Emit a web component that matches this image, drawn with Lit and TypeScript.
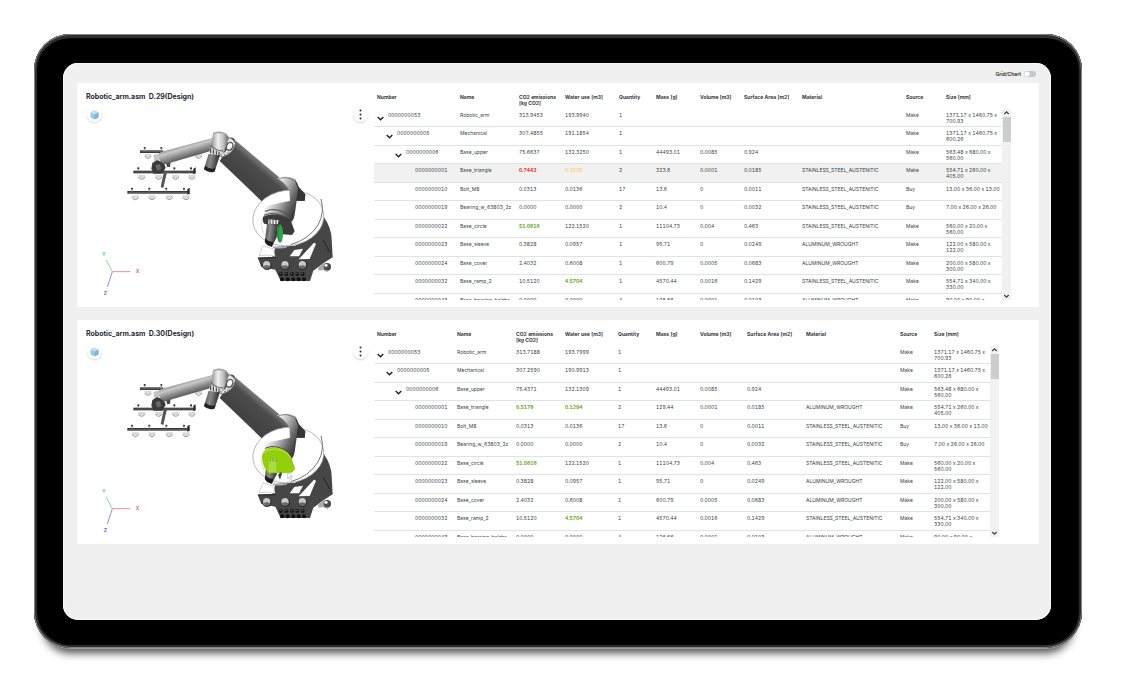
import { LitElement, html, svg, css, nothing } from "lit";
import { customElement, property } from "lit/decorators.js";
import { classMap } from "lit/directives/class-map.js";

type Tone = "bad" | "warn" | "good";
interface Cell { text: string; tone?: Tone }
interface Part {
  level: number;
  number: string;
  name: string;
  co2: Cell;
  water: Cell;
  rest: string[];
  selected?: boolean;
}
interface Revision {
  id: string;
  title: string;
  capHighlighted: boolean;
  columns: number[];
  parts: Part[];
}

const HEADERS = [
  ["Number"], ["Name"], ["CO2 emissions", "[kg CO2]"], ["Water use [m3]"], ["Quantity"], ["Mass [g]"],
  ["Volume [m3]"], ["Surface Area [m2]"], ["Material"], ["Source"], ["Size [mm]"],
];

const STEEL = "STAINLESS_STEEL_AUSTENITIC";
const ALU = "ALUMINUM_WROUGHT";

const c = (text: string, tone?: Tone): Cell => ({ text, tone });

const shared: Part[] = [
  { level: 3, number: "0000000010", name: "Bolt_M8", co2: c("0.0313"), water: c("0.0136"), rest: ["17", "13.6", "0", "0.0011", STEEL, "Buy", "13.00 x 36.00 x 13.00"] },
  { level: 3, number: "0000000019", name: "Bearing_w_63803_2z", co2: c("0.0000"), water: c("0.0000"), rest: ["2", "10.4", "0", "0.0032", STEEL, "Buy", "7.00 x 26.00 x 26.00"] },
  { level: 3, number: "0000000022", name: "Base_circle", co2: c("51.0818", "good"), water: c("122.1520"), rest: ["1", "11104.73", "0.004", "0.463", STEEL, "Make", "560.00 x 20.00 x 560.00"] },
  { level: 3, number: "0000000023", name: "Base_sleeve", co2: c("0.3828"), water: c("0.0957"), rest: ["1", "95.71", "0", "0.0249", ALU, "Make", "122.00 x 580.00 x 122.00"] },
  { level: 3, number: "0000000024", name: "Base_cover", co2: c("2.4032"), water: c("0.6008"), rest: ["1", "600.79", "0.0005", "0.0683", ALU, "Make", "200.00 x 580.00 x 300.00"] },
  { level: 3, number: "0000000032", name: "Base_ramp_2", co2: c("10.5120"), water: c("4.5704", "good"), rest: ["1", "4570.44", "0.0016", "0.1429", STEEL, "Make", "554.71 x 340.00 x 330.00"] },
  { level: 3, number: "0000000043", name: "Base_bearing_holder", co2: c("0.0000"), water: c("0.0000"), rest: ["4", "126.66", "0.0001", "0.0103", ALU, "Make", "90.00 x 90.00 x 120.00"] },
];

const top = (co2: string[], water: string[]): Part[] => [
  { level: 0, number: "0000000053", name: "Robotic_arm", co2: c(co2[0]), water: c(water[0]), rest: ["1", "", "", "", "", "Make", "1371.17 x 1460.75 x 700.93"] },
  { level: 1, number: "0000000005", name: "Mechanical", co2: c(co2[1]), water: c(water[1]), rest: ["1", "", "", "", "", "Make", "1371.17 x 1460.75 x 600.26"] },
  { level: 2, number: "0000000006", name: "Base_upper", co2: c(co2[2]), water: c(water[2]), rest: ["1", "44493.01", "0.0085", "0.924", "", "Make", "563.48 x 680.00 x 560.00"] },
];

const REVISIONS: Revision[] = [
  {
    id: "d29",
    title: "Robotic_arm.asm  D.29(Design)",
    capHighlighted: false,
    columns: [83, 59, 46, 54, 37, 44, 44, 58, 104, 40, 59],
    parts: [
      ...top(["313.9453", "307.4855", "75.6637"], ["193.9940", "191.1854", "132.3250"]),
      { level: 3, number: "0000000001", name: "Base_triangle", co2: c("0.7443", "bad"), water: c("0.3236", "warn"), rest: ["2", "323.6", "0.0001", "0.0185", STEEL, "Make", "554.71 x 260.00 x 405.00"], selected: true },
      ...shared,
    ],
  },
  {
    id: "d30",
    title: "Robotic_arm.asm  D.30(Design)",
    capHighlighted: true,
    columns: [80, 59, 49, 53, 38, 44, 47, 59, 94, 34, 59],
    parts: [
      ...top(["313.7188", "307.2590", "75.4371"], ["193.7999", "190.9913", "132.1309"]),
      { level: 3, number: "0000000001", name: "Base_triangle", co2: c("0.5178", "good"), water: c("0.1294", "good"), rest: ["2", "129.44", "0.0001", "0.0185", ALU, "Make", "554.71 x 260.00 x 405.00"] },
      ...shared,
    ],
  },
];

@customElement("arm-model")
class ArmModel extends LitElement {
  @property({ type: Boolean }) highlighted = false;

  static styles = css`
    :host { display: block; }
    .scene { display: block; width: 290px; height: 224px; }
    .axis { font: 700 15px Inter, "Liberation Sans", sans-serif; }
  `;

  private cup(x: number, y: number) {
    return svg`<path d=${`M${x - 11} ${y - 4}h22q-1 10-11 10t-11-10z`} fill="#d9d9d9"/>
      <path d=${`M${x - 10} ${y + 2}q4 7 10 7t10-7`} fill="none" stroke="#666" stroke-width="2"/>`;
  }

  private rail(x1: number, x2: number, y: number, posts: number[], capped: boolean) {
    return svg`<rect x=${x1} y=${y - 4} width=${x2 - x1} height="8" fill="#383838"/>
      <rect x=${x1 + 4} y=${y - 1} width=${x2 - x1 - 8} height="2" fill="#707070"/>
      ${posts.map((p) => svg`<rect x=${p - 3} y=${y - 14} width="6" height="6" rx="2" fill="#333"/><rect x=${p - 2} y=${y - 9} width="4" height="6" fill="#aaa"/>`)}
      ${capped ? svg`<path d=${`M${x2 - 6} ${y - 10}l7-4v18l-7 3z`} fill="#2c2c2c"/>` : nothing}`;
  }

  render() {
    return html`<svg class="scene" viewBox="3 -3 870 672" role="img" aria-label="Robotic arm model">
      <defs>
        <linearGradient id="fore" x1="320" y1="180" x2="334" y2="226" gradientUnits="userSpaceOnUse">
          <stop offset="0" stop-color="#8b8b8b"/><stop offset=".3" stop-color="#c9c9c9"/><stop offset=".6" stop-color="#8f8f8f"/><stop offset="1" stop-color="#4b4b4b"/>
        </linearGradient>
        <linearGradient id="upper" x1="554" y1="222" x2="505" y2="280" gradientUnits="userSpaceOnUse">
          <stop offset="0" stop-color="#a9a9a9"/><stop offset=".14" stop-color="#777"/><stop offset=".4" stop-color="#4c4c4c"/><stop offset="1" stop-color="#434343"/>
        </linearGradient>
        <linearGradient id="joint" x1="0" x2="1" y1="0" y2="0">
          <stop offset="0" stop-color="#8c8c8c"/><stop offset=".4" stop-color="#f0f0f0"/><stop offset=".7" stop-color="#bdbdbd"/><stop offset="1" stop-color="#5d5d5d"/>
        </linearGradient>
        <linearGradient id="shoulder" x1="590" y1="330" x2="664" y2="366" gradientUnits="userSpaceOnUse">
          <stop offset="0" stop-color="#f2f2f2"/><stop offset=".35" stop-color="#b5b5b5"/><stop offset=".7" stop-color="#6c6c6c"/><stop offset="1" stop-color="#3c3c3c"/>
        </linearGradient>
        <linearGradient id="motor" x1="0" x2="1" y1="0" y2=".2">
          <stop offset="0" stop-color="#444"/><stop offset=".45" stop-color="#8a8a8a"/><stop offset="1" stop-color="#2a2a2a"/>
        </linearGradient>
      </defs>

      ${this.cup(368, 214)}
      ${this.rail(192, 262, 203, [206, 256], false)}
      ${this.cup(216, 214)}
      ${this.rail(172, 358, 264, [187, 240, 295, 345], true)}
      ${[197, 248, 299, 348].map((x) => this.cup(x, 277))}
      ${this.rail(154, 340, 325, [168, 220, 271, 324], true)}
      ${[178, 228, 280, 330].map((x) => this.cup(x, 338))}
      <path d="M264 262l9 2-11 48-8-3z" fill="#555"/>
      <path d="M232 212l14-2 4 24-14 4z" fill="#c5c5c5"/>
      <path d="M229 237l14-8 20 6 6 16-10 18-26 0-7-15z" fill="#3a3a3a"/>
      <path d="M238 244l14-4 4 14-12 6z" fill="#686868"/>
      <path d="M270 236l14-3-2 16-9 0z" fill="#4a4a4a"/>

      <path d="M245 214q2-8 12-11L412 161v38L268 241q-16-2-23-27z" fill="url(#fore)"/>

      <ellipse cx="455" cy="190" rx="19" ry="33" transform="rotate(32 455 190)" fill="#555"/>
      <path d="M472 169q8 0 16 8l128 108 32 34-8 32-66 17L431 231q14-24 27-31t14-31z" fill="url(#upper)"/>
      <path d="M447 160q22-1 31 18-4 30-41 42l-6-6q20-10 27-26z" fill="#e6e6e6" stroke="#666" stroke-width="2"/>
      <ellipse cx="461" cy="187" rx="9" ry="12" transform="rotate(25 461 187)" fill="#fff" stroke="#555" stroke-width="4"/>
      <path d="M434 218q30-12 40-36" fill="none" stroke="#444" stroke-width="3" stroke-dasharray="5 6"/>

      <path d="M411 147q18-10 40 2l8 12-18 50q-22 2-37-18z" fill="url(#joint)"/>
      <path d="M411 147q18-10 40 2l3 5q-22-10-43-3z" fill="#a8a8a8"/>
      <path d="M405 183q12 18 37 18" fill="none" stroke="#555" stroke-width="3"/>
      <path d="M402 192l34 12-6 10-30-8z" fill="#ddd"/>
      <path d="M404 194v14M412 197v14M421 200v12M429 203v11" stroke="#333" stroke-width="3"/>
      <path d="M398 209l34 5-16 48q-15 7-32-7z" fill="url(#motor)"/>
      <path d="M387 245q14 12 32 8l-4 10q-17 6-31-7z" fill="#222"/>

      <path d="M739 372l4 26q24 35 24 68l3 54-28 18-30 22-10 31h-88l-16-34-42-8-11-28 44-2 10-30 58-4 52-26 22-45z" fill="#464646"/>
      <path d="M549 515l12-30 32 10 4 22-22-4z" fill="#fff" stroke="#bbb" stroke-width="2"/>
      <ellipse cx="637" cy="402" rx="107" ry="83" transform="rotate(-8 637 402)" fill="#fff" stroke="#9a9a9a" stroke-width="2"/>
      <path d="M735 345q12 40-9 78-28 44-82 59" fill="none" stroke="#777" stroke-width="3"/>
      <path d="M560 402q-8 22 4 46" fill="none" stroke="#c8c8c8" stroke-width="2"/>
      <path d="M641 517l14-19 26-4-12 23zM668 526l46-50 6 3-19 46z" fill="#fff"/>
      <path d="M592 488l30 1 10-3v5q-20 4-40 1z" fill="#bbb" stroke="#777" stroke-width="1"/>
      <path d="M546 522l54-1M742 470l20 36" stroke="#222" stroke-width="3"/>
      ${[573, 628, 680].map((x) => svg`<circle cx=${x} cy="544" r="14" fill="#2f2f2f"/><circle cx=${x - 1} cy="542" r="11" fill="#c9c9c9"/><path d=${`M${x - 11} 546q11-5 21 1-3 8-10 8t-11-9z`} fill="#696969"/>`)}
      ${[614, 631, 648, 664, 680].map((x) => svg`<circle cx=${x} cy="570" r="6" fill="#161616"/><circle cx=${x - 1} cy="568" r="2" fill="#777"/><circle cx=${x + 4} cy="586" r="6" fill="#111"/>`)}
      <path d="M726 552q8-12 24-16l14 6v14l-10 8-14-6-12 2z" fill="#aaa"/>
      <circle cx="754" cy="548" r="11" fill="#4a4a4a"/><circle cx="750" cy="544" r="5" fill="#ececec"/>

      <path d="M603 283q28-12 55 3 6 14 10 24l20 22-2 18h-24l-6 42q-4 20-12 22l-80-12q-4-18 6-36l72-16-2-30q-14-26-37-37z" fill="url(#shoulder)"/>
      <path d="M656 287q8 8 12 22l20 22-2 19h-25l5-36z" fill="#353535"/>
      <path d="M606 285q26-10 47 4" fill="none" stroke="#555" stroke-width="2"/>
      <path d="M567 382q30-16 78 14M564 394q30-16 80 14" fill="none" stroke="#4b4b4b" stroke-width="3"/>

      <path d="M561 398q36-16 82 8l13 36-8 11-30-2-14-26-38-5q-8-8-5-22z" fill="#3b3b3b"/>
      <path d="M578 406l30 3-3 12-29-2z" fill="#ededed"/>
      <path d="M582 406v14M591 407v13M600 408v12" stroke="#444" stroke-width="3"/>
      <path d="M573 420l33 2-4 38-14 28q-15-2-22-14z" fill="url(#motor)"/>
      <path d="M568 463q10 12 24 10l-4 15q-15-2-21-14z" fill="#1c1c1c"/>
      ${this.highlighted
        ? svg`<path d="M558 411q1-31 38-32 36 3 48 30l13 36-10 10-70 2q-18-22-19-46z" fill="#92cf08"/>
            <path d="M562 396q24-18 54-8 20 7 29 24" fill="none" stroke="#b5e043" stroke-width="4"/>
            <path d="M580 412l22 0-1 42-24-1z" fill="#a9dc4c"/>
            <path d="M583 412v10M591 410v12M600 412v12" stroke="#6fa21a" stroke-width="3"/>
            <path d="M606 462q10-14 12-4l-6 18z" fill="#444"/>
            <path d="M635 454v19l5-4 4 8 3-2-4-8h7z" fill="#fff" stroke="#666" stroke-width="1"/>`
        : svg`<ellipse cx="612" cy="449" rx="9" ry="28" fill="#2ba44d"/><path d="M609 424q-7 24 0 48" fill="none" stroke="#1d7a37" stroke-width="3"/>`}

      <path d="M109 563h54" stroke="#e89494" stroke-width="3"/>
      <path d="M109 563L90 527" stroke="#8ddc95" stroke-width="3"/>
      <path d="M109 563L94 609" stroke="#8f8fe4" stroke-width="3"/>
      <text class="axis" x="179" y="568" fill="#e26a6a">X</text>
      <text class="axis" x="78" y="516" fill="#63cf70">Y</text>
      <text class="axis" x="83" y="633" fill="#6565dc">Z</text>
    </svg>`;
  }
}

@customElement("revision-panel")
class RevisionPanel extends LitElement {
  @property({ attribute: false }) revision!: Revision;

  static styles = css`
    :host { display: block; }
    .panel { display: flex; height: 224px; background: #fff; overflow: hidden; }
    .viewer { position: relative; flex: 0 0 297px; }
    .title {
      position: absolute; left: 9px; top: 9px; margin: 0; white-space: pre;
      font-size: 7px; line-height: 10px; font-weight: 700; color: #262b33;
    }
    .tool {
      position: absolute; top: 24px; display: grid; place-items: center;
      width: 15px; height: 15px; padding: 0; border: 0; border-radius: 50%;
      background: #fff; box-shadow: 0 1px 2px rgba(0, 0, 0, 0.16);
    }
    .cube { left: 10px; }
    .more { left: 276px; }
    .data { display: flex; flex: 1; min-width: 0; height: 206px; padding-top: 11px; }
    .clip { flex: 1; min-width: 0; overflow: hidden; }
    .table {
      width: 100%; table-layout: fixed; border-collapse: separate; border-spacing: 0;
      font-feature-settings: "tnum" 1, "calt" 0;
    }
    th, td {
      padding: 3px 0 0 3px; text-align: left; vertical-align: top;
      font-size: 5px; line-height: 6px; color: #3b3f44; white-space: nowrap;
    }
    thead th { padding-top: 0; height: 15px; font-weight: 700; color: #33373d; }
    .line { display: block; }
    .wrap { white-space: normal; }
    td { box-sizing: border-box; height: 18px; border-bottom: 1px solid #e1e3e3; }
    tr:nth-child(even) td { height: 19px; }
    .selected td { background: #f1f1f1; }
    .num { display: flex; padding-left: calc(var(--level) * 9px); gap: 4px; }
    .toggle { flex: 0 0 7px; height: 9px; padding: 4px 0 0; border: 0; background: none; display: block; }
    .toggle svg { display: block; }
    .bad { color: #e0302a; font-weight: 700; }
    .warn { color: #fcd27c; font-weight: 700; }
    .good { color: #67a91c; font-weight: 700; }
    .bar {
      flex: 0 0 9px; margin-top: 15px; background: #f1f1f1;
      display: flex; flex-direction: column; align-items: center;
    }
    .thumb { width: 8px; height: 25px; margin-bottom: auto; background: #cdcdcd; }
    .arrow { display: block; width: 9px; height: 8px; }
    .gutter { flex: 0 0 28px; }
    .gutter.wide { flex-basis: 40px; }
  `;

  private value(cell: Cell) {
    return html`<td><span class=${cell.tone ?? ""}>${cell.text}</span></td>`;
  }

  private row(p: Part) {
    return html`<tr class=${classMap({ selected: !!p.selected })}>
      <td>
        <div class="num" style=${`--level:${p.level}`}>
          ${p.level < 3
            ? html`<button class="toggle" aria-label="Collapse ${p.name}">
                <svg width="7" height="5" viewBox="0 0 7 5"><path d="M.7 1l2.800 2.800L6.300 1" fill="none" stroke="#222" stroke-width="1.400"/></svg>
              </button>`
            : html`<span class="toggle"></span>`}
          <span>${p.number}</span>
        </div>
      </td>
      <td>${p.name}</td>
      ${this.value(p.co2)}${this.value(p.water)}
      ${p.rest.map((v, i) => html`<td class=${i === 6 && p.rest[5] === "Make" ? "wrap" : ""}>${v}</td>`)}
    </tr>`;
  }

  render() {
    const r = this.revision;
    return html`<section class="panel" aria-labelledby="title">
      <div class="viewer">
        <arm-model ?highlighted=${r.capHighlighted}></arm-model>
        <h2 class="title" id="title">${r.title}</h2>
        <button class="tool cube" aria-label="View orientation">
          <svg width="9" height="10" viewBox="0 0 9 10"><path d="M4.500 .5l4 2v5l-4 2-4-2v-5z" fill="#9acbe7"/><path d="M4.500 .5l4 2-4 2-4-2z" fill="#c2e1f2"/><path d="M4.500 4.500l4-2v5l-4 2z" fill="#7db6da"/></svg>
        </button>
        <button class="tool more" aria-label="More options">
          <svg width="3" height="11" viewBox="0 0 3 11"><g fill="#2b2b2b"><circle cx="1.500" cy="1.500" r="1"/><circle cx="1.500" cy="5.500" r="1"/><circle cx="1.500" cy="9.500" r="1"/></g></svg>
        </button>
      </div>
      <div class="data">
        <div class="clip">
          <table class="table">
            <colgroup>${r.columns.map((w) => html`<col style=${`width:${w}px`}>`)}</colgroup>
            <thead><tr>${HEADERS.map((lines) => html`<th scope="col">${lines.map((l) => html`<span class="line">${l}</span>`)}</th>`)}</tr></thead>
            <tbody>${r.parts.map((p) => this.row(p))}</tbody>
          </table>
        </div>
        <div class="bar" aria-hidden="true">
          <svg class="arrow" viewBox="0 0 9 8"><path d="M2.300 5l2.200-2.200L6.700 5" fill="none" stroke="#444" stroke-width="1.300"/></svg>
          <div class="thumb"></div>
          <svg class="arrow" viewBox="0 0 9 8"><path d="M2.300 3l2.200 2.200L6.700 3" fill="none" stroke="#444" stroke-width="1.300"/></svg>
        </div>
        <div class=${classMap({ gutter: true, wide: r.capHighlighted })}></div>
      </div>
    </section>`;
  }
}

@customElement("app-root")
class AppRoot extends LitElement {
  static styles = css`
    :host {
      display: block; box-sizing: border-box; min-height: 100vh; padding: 34px 47px 50px 34px;
      background: #fff; font-family: Inter, "Liberation Sans", sans-serif;
    }
    .device {
      box-sizing: border-box; padding: 29px 31px 28px 29px; border-radius: 36px; background: #000;
      box-shadow:
        inset 0 0 0 1px #808284, inset 0 0 1px 3px #2e2f31, inset 0 3px 1px 1px #3a3a3b,
        0 2px 1px -1px #a0a0a0, 0 14px 9px -9px rgba(0, 0, 0, 0.7);
    }
    .screen {
      box-sizing: border-box; min-height: calc(100vh - 142px); padding: 0 12px 0 14px;
      border-radius: 15px; background: #f0f0f0; box-shadow: inset 0 0 1px 1px #fafafa;
      display: flex; flex-direction: column;
    }
    .topbar { display: flex; justify-content: flex-end; align-items: center; height: 20px; padding: 2px 3px 0 0; box-sizing: border-box; }
    .switch { display: flex; align-items: center; gap: 3px; font-size: 5px; line-height: 6px; font-weight: 600; color: #222; }
    .switch input {
      appearance: none; width: 12px; height: 6px; margin: 0; border-radius: 3px;
      background: radial-gradient(circle at 3px 3px, #fff 2px, transparent 3px) #c6c8d0;
    }
    .panels { display: flex; flex-direction: column; gap: 13px; }
  `;

  render() {
    return html`<main class="device">
      <div class="screen">
        <header class="topbar">
          <label class="switch" for="mode">Grid/Chart<input id="mode" type="checkbox" role="switch"></label>
        </header>
        <div class="panels">
          ${REVISIONS.map((r) => html`<revision-panel .revision=${r}></revision-panel>`)}
        </div>
      </div>
    </main>`;
  }
}
